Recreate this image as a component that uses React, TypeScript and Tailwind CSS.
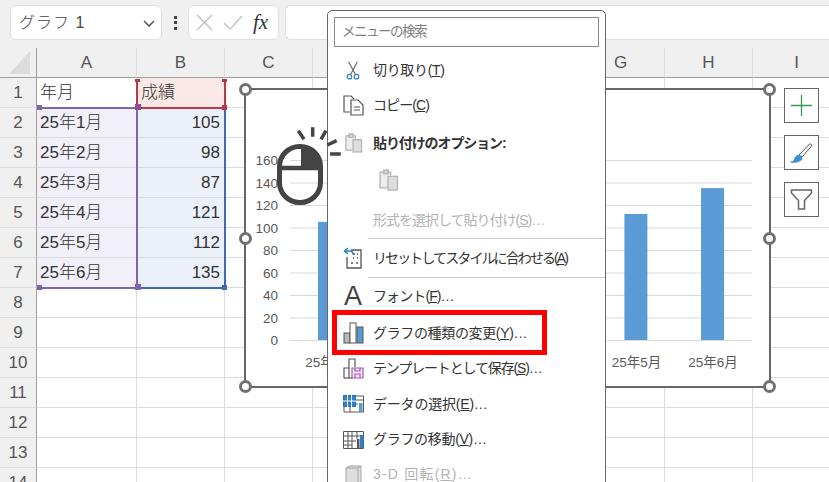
import type { ReactNode } from 'react';

const FONT = "font-['Liberation_Sans','Noto_Sans_CJK_JP',sans-serif]";
const COLS = ['A', 'B', 'C', 'D', 'E', 'F', 'G', 'H', 'I'];
const ROWS = [1, 2, 3, 4, 5, 6, 7, 8, 9, 10, 11, 12, 13, 14];
const MONTHS = ['25年1月', '25年2月', '25年3月', '25年4月', '25年5月', '25年6月'];
const SCORES = [105, 98, 87, 121, 112, 135];
const AXIS = [0, 20, 40, 60, 80, 100, 120, 140, 160];

function Handle({ className }: { className: string }) {
  return <span className={`absolute size-[13px] rounded-full border-[3px] border-[#707070] bg-white ${className}`} />;
}

function Corner({ className }: { className: string }) {
  return <span className={`absolute size-[5px] ${className}`} />;
}

function Chart() {
  return (
    <div className="absolute left-[244px] top-[88px] h-[300px] w-[527px] border-2 border-[#666666] bg-white">
      <svg viewBox="246 90 523 296" className="block h-full w-full">
        {AXIS.map((v) => (
          <g key={v}>
            <line x1="290" x2="752" y1={340 - v * 1.125 + 0.5} y2={340 - v * 1.125 + 0.5} stroke="#d9d9d9" />
            <text x="278" y={345 - v * 1.125} textAnchor="end" fontSize="13.5" fill="#595959" fontFamily="Liberation Sans">{v}</text>
          </g>
        ))}
        {SCORES.map((s, i) => (
          <g key={i}>
            <rect x={318 + i * 76.6} y={340 - s * 1.125} width="23" height={s * 1.125} fill="#5b9bd5" />
            <text x={330 + i * 76.6} y="367" textAnchor="middle" fontSize="13.5" fill="#595959" fontFamily="Liberation Sans, Noto Sans CJK JP">{MONTHS[i]}</text>
          </g>
        ))}
      </svg>
      <Handle className="-left-[7px] -top-[7px]" />
      <Handle className="-right-[7px] -top-[7px]" />
      <Handle className="-left-[7px] top-[142px]" />
      <Handle className="-right-[7px] top-[142px]" />
      <Handle className="-bottom-[7px] -left-[7px]" />
      <Handle className="-bottom-[7px] -right-[7px]" />
    </div>
  );
}

function Sheet() {
  return (
    <div className="relative">
      <div className="grid grid-cols-[37px_100px_88px_88px_88px_88px_88px_88px_88px_88px] grid-rows-[30px_repeat(14,30px)]">
        <div className="flex items-end justify-center border-b border-r border-[#9f9f9f] bg-[#f0f0f0] pb-[3px] pl-[3px]">
          <svg width="21" height="23" viewBox="0 0 21 23"><polygon points="21,0 21,23 0,23" fill="#dcdcdc" /></svg>
        </div>
        {COLS.map((c) => (
          <div key={c} className="flex items-center justify-center border-b border-r border-b-[#9f9f9f] border-r-[#dcdcdc] bg-[#f0f0f0] text-[17px] text-[#555555]">{c}</div>
        ))}
        {ROWS.map((r) => (
          <Row key={r} r={r} />
        ))}
      </div>
      <div className="pointer-events-none absolute bottom-0 left-px right-0 top-px grid grid-cols-[37px_100px_88px_1fr] grid-rows-[30px_30px_repeat(6,30px)_1fr]">
        <div className="relative col-start-2 row-start-3 row-end-9 border-b-2 border-r-2 border-[#8064ac]">
          <Corner className="-bottom-[3px] -left-px bg-[#8064ac]" />
        </div>
        <div className="relative col-start-3 row-start-3 row-end-9 border-b-2 border-r-2 border-[#3c6ab8]">
          <Corner className="-bottom-[3px] -right-[3px] bg-[#3c6ab8]" />
          <span className="absolute -bottom-[3px] -left-[3px] size-[6px] bg-[#8064ac]" />
        </div>
        <div className="relative col-start-2 row-start-2 border-b-2 border-[#8064ac]">
          <Corner className="-bottom-[3px] -left-px bg-[#8064ac]" />
        </div>
        <div className="relative col-start-3 row-start-2 -ml-[2px] border-x-2 border-b-2 border-[#b43a4a]">
          <span className="absolute -left-[3px] top-0 h-[3px] w-[5px] bg-[#b43a4a]" />
          <span className="absolute -right-[3px] top-0 h-[3px] w-[5px] bg-[#b43a4a]" />
          <span className="absolute -bottom-[3px] -left-[3px] size-[6px] bg-[#8f4f9c]" />
          <Corner className="-bottom-[3px] -right-[3px] bg-[#b43a4a]" />
        </div>
      </div>
    </div>
  );
}

function Row({ r }: { r: number }) {
  const cell = 'flex items-center border-b border-r border-[#dcdcdc] pt-[1px] text-[17px] font-light text-[#333333]';
  const a = r === 1 ? '年月' : MONTHS[r - 2];
  const b = r === 1 ? '成績' : SCORES[r - 2];
  return (
    <>
      <div className="flex items-center justify-center border-b border-r border-b-[#dcdcdc] border-r-[#9f9f9f] bg-[#f0f0f0] text-[17px] text-[#555555]">{r}</div>
      <div className={`${cell} pl-[3px] ${r > 1 && r < 8 ? 'bg-[#f1eff8]' : 'bg-white'}`}>{a}</div>
      <div className={`${cell} ${r === 1 ? 'bg-[#fbe9e7] pl-[4px]' : r < 8 ? 'justify-end bg-[#ecf0f9] pr-[4px]' : 'bg-white'}`}>{b}</div>
      {COLS.slice(2).map((c) => (
        <div key={c} className={cell} />
      ))}
    </>
  );
}

function Item({ icon, children, h, t, disabled, bold }: { icon?: ReactNode; children?: ReactNode; h: string; t: string; disabled?: boolean; bold?: boolean }) {
  return (
    <div className={`flex shrink-0 items-center ${h}`}>
      <div className="flex w-[45px] shrink-0 items-center justify-center pl-[5px]">{icon}</div>
      <div className={`whitespace-nowrap text-[14px] ${t} ${disabled ? 'text-[#b3b3b3]' : 'text-[#333333]'} ${bold ? 'font-bold text-[#222222]' : ''}`}>{children}</div>
    </div>
  );
}

function Sep() {
  return <div className="ml-[40px] h-px shrink-0 bg-[#cfcfcf]" />;
}

function PasteIcon({ size }: { size: number }) {
  return (
    <svg width={size} height={size * 1.1} viewBox="0 0 20 22" fill="none" stroke="#b4b4b4" strokeWidth="1.3">
      <path d="M12 6V3H9.5V1.5h-4V3H2v15h7" fill="#ededed" />
      <rect x="5.5" y="1" width="4" height="3.5" fill="#d8d8d8" />
      <rect x="9.5" y="7" width="9" height="13" fill="#dedede" />
    </svg>
  );
}

function Menu() {
  return (
    <div className="absolute left-[327px] top-[10px] flex h-[490px] w-[279px] flex-col rounded-t-[5px] border border-[#666666] bg-white">
      <div className="mx-[6px] mb-[5px] mt-[6px] flex h-[30px] shrink-0 items-center border border-[#8c8c8c] px-[7px] text-[13.5px] tracking-[-1.5px] text-[#808080]">メニューの検索</div>
      <Item h="h-[36px]" t="tracking-[-0.33px]" icon={
        <svg width="14" height="21" viewBox="0 0 16 22" fill="none" strokeWidth="1.3">
          <path d="M3 1l7.5 14M13 1L5.5 15" stroke="#666666" />
          <circle cx="4" cy="18" r="2.6" stroke="#2f80c8" />
          <circle cx="12" cy="18" r="2.6" stroke="#2f80c8" />
        </svg>
      }>切り取り(<u>T</u>)</Item>
      <Item h="h-[35px]" t="tracking-[-0.9px]" icon={
        <svg width="21" height="21" viewBox="0 0 21 21" fill="none" stroke="#555555" strokeWidth="1.2">
          <path d="M7 17H1V1h7l3 3" />
          <path d="M8 5h7l5 5v10H8z" fill="#ffffff" />
          <path d="M11 12h6M11 15h6" />
        </svg>
      }>コピー(<u>C</u>)</Item>
      <Item h="h-[40px]" t="tracking-[-1.1px]" bold icon={<PasteIcon size={19} />}>貼り付けのオプション:</Item>
      <div className="flex h-[35px] shrink-0 items-center pl-[50px]"><PasteIcon size={21} /></div>
      <Item h="h-[40px] pt-[4px]" t="tracking-[-1px]" disabled>形式を選択して貼り付け(<u>S</u>)…</Item>
      <Sep />
      <Item h="h-[38px]" t="tracking-[-1.9px]" icon={
        <svg width="20" height="22" viewBox="0 0 20 22" fill="none" strokeWidth="1.3">
          <path d="M8 3h10v18H4V10" stroke="#555555" />
          <path d="M10 7h2M14 7h1M10 11h1M14 11h1M8 16h2M13 16h2" stroke="#555555" />
          <path d="M5 1L1.5 4 5 7M2 4h5c2 0 3 1.500 3 3.500" stroke="#2f80c8" strokeWidth="1.5" />
        </svg>
      }>リセットしてスタイルに合わせる(<u>A</u>)</Item>
      <Sep />
      <Item h="h-[37px]" t="tracking-[-0.9px]" icon={<span className="text-[27px] leading-none text-[#444444]">A</span>}>フォント(<u>F</u>)…</Item>
      <Item h="h-[36px]" t="tracking-[-0.35px]" icon={
        <svg width="21" height="22" viewBox="0 0 21 22" stroke="#555555" strokeWidth="1">
          <rect x="1" y="11" width="6" height="10" fill="#b8b8b8" />
          <rect x="7" y="1" width="6" height="20" fill="#ffffff" />
          <rect x="14" y="5" width="6" height="16" fill="#5b9bd5" />
        </svg>
      }>グラフの種類の変更(<u>Y</u>)…</Item>
      <Item h="h-[35px]" t="tracking-[-1.15px]" icon={
        <svg width="21" height="21" viewBox="0 0 21 21" fill="none" strokeWidth="1.2">
          <path d="M1 20V10h5M6 20V1h6v8" stroke="#555555" />
          <path d="M1 20h8" stroke="#555555" />
          <path d="M9 10h11v10H9z" stroke="#a855b8" fill="#f6e8f8" />
          <path d="M12 10v3h5v-3M12 20v-4h5v4" stroke="#a855b8" />
        </svg>
      }>テンプレートとして保存(<u>S</u>)…</Item>
      <Item h="h-[36px]" t="tracking-[-0.2px]" icon={
        <svg width="21" height="18" viewBox="0 0 21 18" strokeWidth="1">
          <rect x="0.5" y="0.500" width="12" height="11" fill="#2f80c8" stroke="#2f6fb0" />
          <path d="M4.500 0v12M8.500 0v12M0 6h13" stroke="#ffffff" />
          <path d="M13 1h7.500v16H1v-5" fill="none" stroke="#555555" />
          <path d="M7 12v5M13 5h7M13 9h2" stroke="#555555" />
          <rect x="16" y="8" width="3.500" height="9" fill="#5b9bd5" />
        </svg>
      }>データの選択(<u>E</u>)…</Item>
      <Item h="h-[35px]" t="tracking-[-0.3px]" icon={
        <svg width="21" height="18" viewBox="0 0 21 18" fill="none" stroke="#555555" strokeWidth="1">
          <path d="M0.500 0.500h20v17h-20z" />
          <path d="M0 5h21M0 10h13M0 14h9M5 0v18M9 0v18M14 0v8" />
          <rect x="14" y="8" width="2.500" height="9" fill="#555555" stroke="none" />
          <rect x="17" y="4" width="3.500" height="13" fill="#2f80c8" stroke="none" />
        </svg>
      }>グラフの移動(<u>V</u>)…</Item>
      <Item h="h-[35px]" t="tracking-[1.2px]" disabled icon={
        <svg width="17" height="20" viewBox="0 0 17 20" stroke="#a6a6a6" strokeWidth="1">
          <path d="M1 3l3-2h12v16l-3 2H1z" fill="#dedede" />
          <path d="M1 3h12v16" fill="none" />
          <path d="M13 3l3-2" />
        </svg>
      }>3-D 回転(<u>R</u>)…</Item>
    </div>
  );
}

function Mouse() {
  return (
    <svg viewBox="275 125 70 85" className="absolute left-[275px] top-[125px] h-[85px] w-[70px]" fill="none" stroke="#444444">
      <rect x="279.500" y="146.500" width="41" height="56" rx="20" strokeWidth="5" />
      <path d="M301 146h2c10 0 18 6 18 19v2h-20z" fill="#444444" stroke="none" />
      <path d="M280 168h40" strokeWidth="4.500" />
      <path d="M298.300 130.700l5.700 8.600M312.700 127.300v9.400M326 130.700l-5 8.600M336.700 140.700l-9.400 4.300M340.700 154H330" strokeWidth="3.500" />
    </svg>
  );
}

function SideButton({ children }: { children: ReactNode }) {
  return <div className="flex size-[35px] items-center justify-center border border-[#666666] bg-white">{children}</div>;
}

export default function App() {
  return (
    <div className={`relative h-[482px] w-[829px] overflow-hidden bg-white ${FONT}`}>
      <div className="flex h-[48px] items-start bg-[#f0f0f0] pl-[10px] pt-[5px]">
        <div className="flex h-[35px] w-[152px] items-center justify-between rounded-[6px] border border-[#e0e0e0] bg-white pl-[8px] pr-[4px] text-[16px] font-light tracking-[1px] text-[#444444]">
          グラフ 1
          <svg width="16" height="16" viewBox="0 0 16 16" fill="none" stroke="#444444" strokeWidth="1.3"><path d="M3 6l5 5 5-5" /></svg>
        </div>
        <div className="flex h-[35px] w-[26px] flex-col items-center justify-center gap-[2.500px]">
          <span className="size-[3px] bg-[#444444]" />
          <span className="size-[3px] bg-[#444444]" />
          <span className="size-[3px] bg-[#444444]" />
        </div>
        <div className="flex h-[35px] w-[91px] items-center rounded-[6px] border border-[#e0e0e0] bg-white pl-[7px]">
          <svg width="17" height="17" viewBox="0 0 17 17" fill="none" stroke="#c4c4c4" strokeWidth="1.500"><path d="M1 1l15 15M16 1L1 16" /></svg>
          <svg className="ml-[10px]" width="20" height="17" viewBox="0 0 20 17" fill="none" stroke="#c4c4c4" strokeWidth="1.500"><path d="M1 9l6 6L19 2" /></svg>
          <span className="ml-[10px] font-['Liberation_Serif',serif] text-[21px] italic text-[#333333]">fx</span>
        </div>
        <div className="ml-[6px] h-[35px] flex-1 rounded-l-[6px] border border-r-0 border-[#e0e0e0] bg-white" />
      </div>
      <Sheet />
      <Chart />
      <Menu />
      <Mouse />
      <div className="absolute left-[332px] top-[310px] h-[45px] w-[215px] border-[5px] border-[#ff0000]" />
      <div className="absolute left-[784px] top-[88px] flex flex-col gap-[12px]">
        <SideButton>
          <svg width="23" height="23" viewBox="0 0 23 23" stroke="#2e9e4f" strokeWidth="1.300"><path d="M11.500 1v21M1 11.500h21" /></svg>
        </SideButton>
        <SideButton>
          <svg width="23" height="20" viewBox="0 0 23 20" strokeWidth="1">
            <path d="M9 12L19.500 1c1.500-.5 2.500.5 2 2L12 14z" fill="#ffffff" stroke="#555555" />
            <path d="M1 19c3 0 3-2 4-4 1-3 4-3 6-2 1 1 1 3 0 4-3 2.500-7 2.500-10 2z" fill="#3d8fd6" stroke="#3d8fd6" />
          </svg>
        </SideButton>
        <SideButton>
          <svg width="23" height="23" viewBox="0 0 23 23" fill="none" stroke="#666666" strokeWidth="1.500"><path d="M1.500 2h20v3l-7 7.500V21h-6v-8.500l-7-7.500z" /></svg>
        </SideButton>
      </div>
    </div>
  );
}
